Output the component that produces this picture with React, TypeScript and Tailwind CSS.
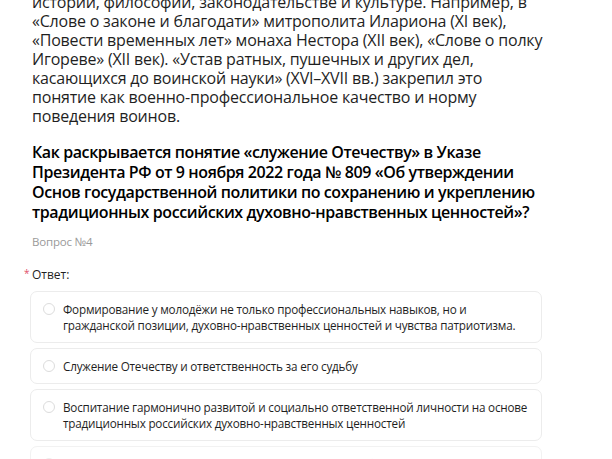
const answers = [
  [
    "Формирование у молодёжи не только профессиональных навыков, но и",
    "гражданской позиции, духовно-нравственных ценностей и чувства патриотизма.",
  ],
  ["Служение Отечеству и ответственность за его судьбу"],
  [
    "Воспитание гармонично развитой и социально ответственной личности на основе",
    "традиционных российских духовно-нравственных ценностей",
  ],
]

const bodyLines = [
  "истории, философии, законодательстве и культуре. Например, в",
  "«Слове о законе и благодати» митрополита Илариона (XI век),",
  "«Повести временных лет» монаха Нестора (XII век), «Слове о полку",
  "Игореве» (XII век). «Устав ратных, пушечных и других дел,",
  "касающихся до воинской науки» (XVI–XVII вв.) закрепил это",
  "понятие как военно-профессиональное качество и норму",
  "поведения воинов.",
]

const questionLines = [
  "Как раскрывается понятие «служение Отечеству» в Указе",
  "Президента РФ от 9 ноября 2022 года № 809 «Об утверждении",
  "Основ государственной политики по сохранению и укреплению",
  "традиционных российских духовно-нравственных ценностей»?",
]

function Radio() {
  return (
    <span className="mt-[2px] h-[12px] w-[12px] shrink-0 rounded-full border border-[#dcdcdc] bg-white" />
  )
}

export default function App() {
  return (
    <div className="h-[459px] w-[612px] overflow-hidden bg-white font-['Open_Sans',sans-serif] text-[#1f1f1f]">
      <div className="-mt-[7px] pl-[32px]">
        <p className="text-[16px] leading-[19px] tracking-[-0.2px]">
          {bodyLines.map((l, i) => (
            <span key={i} className="block whitespace-nowrap">
              {l}
            </span>
          ))}
        </p>
        <h2 className="mt-[16px] text-[16px] font-semibold leading-[20px] tracking-[-0.4px] text-black">
          {questionLines.map((l, i) => (
            <span key={i} className="block whitespace-nowrap">
              {l}
            </span>
          ))}
        </h2>
        <div className="mt-[12px] text-[11.5px] leading-[16px] tracking-[-0.2px] text-[#9a9a9a]">Вопрос №4</div>
      </div>

      <div className="mt-[17px] flex items-start pl-[24px] text-[12px] leading-[16px]">
        <span className="w-[8px] text-[10px] leading-[12px] text-[#e0506a]">*</span>
        <span>Ответ:</span>
      </div>

      <div className="ml-[30px] mt-[8px] flex w-[512px] flex-col gap-[5px]">
        {answers.map((a, i) => (
          <div
            key={i}
            className="flex gap-[8px] rounded-[7px] border border-[#ececec] px-[12px] py-[9px] text-[11.7px] leading-[16px] tracking-[-0.2px]"
          >
            <Radio />
            <div>
              {a.map((l, j) => (
                <span key={j} className="block whitespace-nowrap">
                  {l}
                </span>
              ))}
            </div>
          </div>
        ))}
        <div className="flex gap-[8px] rounded-[7px] border border-[#f2f2f2] px-[12px] py-[9px] text-[11.7px] leading-[16px] tracking-[-0.2px] text-[#eeeeee]">
          <span className="mt-[2px] h-[12px] w-[12px] shrink-0 rounded-full border border-[#eeeeee]" />
          <span className="whitespace-nowrap">Уважение к традициям и культуре народов России, любовь к родной земле</span>
        </div>
      </div>
    </div>
  )
}
